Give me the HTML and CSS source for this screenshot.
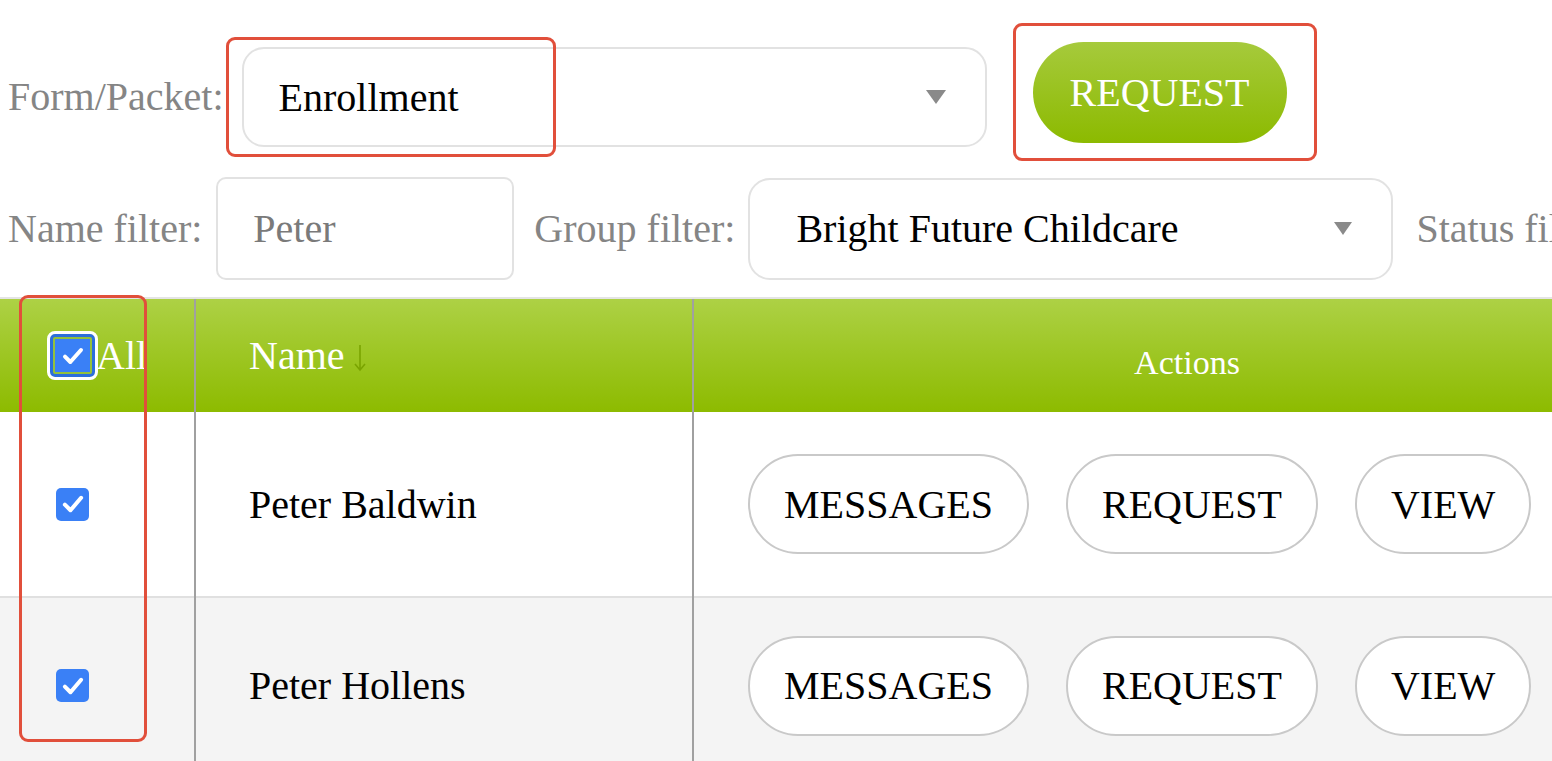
FILE: index.html
```html
<!DOCTYPE html>
<html>
<head>
<meta charset="utf-8">
<link rel="stylesheet" href="styles.css">
</head>
<body>
<div class="page">
  <div class="filters">
    <div class="row row-form">
      <span class="label">Form/Packet:</span>
      <div class="select select-form"><span>Enrollment</span><span class="caret"></span></div>
      <button class="btn-green">REQUEST</button>
    </div>
    <div class="row row-filter">
      <span class="label label-name">Name filter:</span>
      <div class="input"><span class="placeholder">Peter</span></div>
      <span class="label label-group">Group filter:</span>
      <div class="select select-group"><span>Bright Future Childcare</span><span class="caret"></span></div>
      <span class="label label-status">Status filter:</span>
    </div>
  </div>

  <table class="grid">
    <colgroup><col class="c1"><col class="c2"><col class="c3"></colgroup>
    <thead>
      <tr>
        <th class="th-all"><span class="all-wrap"><span class="cb cb-head"><svg viewBox="0 0 24 24"><path d="M6 12.5l4 4 8-9" /></svg></span><span class="all-text">All</span></span></th>
        <th class="th-name">Name<svg class="sort" viewBox="0 0 14 30"><path d="M7 2v25M2 21l5 6 5-6"/></svg></th>
        <th class="th-actions"><span class="actions-label">Actions</span></th>
      </tr>
    </thead>
    <tbody>
      <tr class="r1">
        <td class="td-cb"><span class="cb"><svg viewBox="0 0 24 24"><path d="M5.5 12.5l4.5 4.5 8.5-10" /></svg></span></td>
        <td class="td-name">Peter Baldwin</td>
        <td class="td-actions"><div class="actions"><button class="pill">MESSAGES</button><button class="pill">REQUEST</button><button class="pill">VIEW</button></div></td>
      </tr>
      <tr class="r2">
        <td class="td-cb"><span class="cb"><svg viewBox="0 0 24 24"><path d="M5.5 12.5l4.5 4.5 8.5-10" /></svg></span></td>
        <td class="td-name">Peter Hollens</td>
        <td class="td-actions"><div class="actions"><button class="pill">MESSAGES</button><button class="pill">REQUEST</button><button class="pill">VIEW</button></div></td>
      </tr>
    </tbody>
  </table>

  <div class="mark mark-1"></div>
  <div class="mark mark-2"></div>
  <div class="mark mark-3"></div>
</div>
</body>
</html>
```

FILE: styles.css
```css
html, body {
  margin: 0;
  padding: 0;
  background: #fff;
  overflow: hidden;
}
body {
  width: 1552px;
  height: 761px;
  font-family: "Liberation Serif", "Times New Roman", serif;
  font-size: 40px;
  color: #000;
}
.page {
  position: relative;
  width: 1552px;
  height: 761px;
  overflow: hidden;
}
.filters {
  padding: 47px 0 0 8px;
  display: flex;
  flex-direction: column;
  gap: 30px;
}
.row {
  display: flex;
  align-items: center;
  white-space: nowrap;
}
.row > * { flex-shrink: 0; }
.label {
  color: #858585;
  line-height: 1;
}
.row-form .label { margin-right: 18px; }
.select {
  box-sizing: border-box;
  height: 100px;
  border: 2px solid #e2e2e2;
  border-radius: 22px;
  display: flex;
  align-items: center;
  justify-content: space-between;
  padding: 0 39px 0 35px;
  color: #000;
}
.select-form { width: 745px; }
.caret {
  width: 0;
  height: 0;
  border-left: 10px solid transparent;
  border-right: 10px solid transparent;
  border-top: 14px solid #8a8a8a;
}
.btn-green {
  box-sizing: border-box;
  width: 254px;
  height: 101px;
  margin-left: 46px;
  margin-top: -9px;
  border: none;
  border-radius: 51px;
  background: linear-gradient(#a6ca3c, #8cba00);
  color: #fff;
  font-family: "Liberation Serif", "Times New Roman", serif;
  font-size: 40px;
  padding: 0;
}
.row-filter { height: 103px; }
.label-name { margin-right: 14px; }
.label-group { margin-right: 13px; }
.input {
  box-sizing: border-box;
  width: 298px;
  height: 103px;
  border: 2px solid #e2e2e2;
  border-radius: 10px;
  display: flex;
  align-items: center;
  padding-left: 35px;
  margin-right: 20px;
}
.placeholder { color: #7a7a7a; }
.select-group {
  width: 645px;
  height: 102px;
  padding-left: 46px;
  margin-right: 23px;
}
.select-group .caret {
  border-left-width: 9px;
  border-right-width: 9px;
  border-top-width: 13px;
}

.grid {
  margin-top: 17px;
  width: 1680px;
  border-collapse: collapse;
  table-layout: fixed;
}
.c1 { width: 195px; }
.c2 { width: 498px; }
.c3 { width: 987px; }
.grid th {
  height: 113px;
  padding: 0;
  background: linear-gradient(#add145, #8dbb00);
  color: #fff;
  font-weight: normal;
  text-align: left;
  border-top: 2px solid #e4e4e4;
  border-left: 2px solid #a0a0a0;
  vertical-align: middle;
}
.grid th:first-child, .grid td:first-child { border-left: none; }
.th-all { padding-left: 47px !important; }
.all-wrap {
  display: flex;
  align-items: center;
  white-space: nowrap;
}
.th-name { padding-left: 53px !important; white-space: nowrap; }
.sort {
  width: 14px;
  height: 30px;
  margin-left: 8px;
  vertical-align: -4px;
  fill: none;
  stroke: #7aa400;
  stroke-width: 1.6;
}
.th-actions {
  text-align: center !important;
  font-size: 34px;
}
.actions-label {
  display: inline-block;
  padding-top: 14px;
}
.grid td {
  height: 184px;
  padding: 0;
  border-left: 2px solid #a0a0a0;
  border-top: 2px solid #e0e0e0;
  vertical-align: middle;
}
.r1 td { border-top: none; }
.r2 td { background: #f4f4f4; height: 175px; }
.td-cb { padding-left: 56px !important; }
.td-name { padding-left: 53px !important; }
.td-actions { padding-left: 54px !important; }
.cb {
  box-sizing: border-box;
  width: 33px;
  height: 33px;
  border-radius: 5px;
  background: #3a80f6;
  display: flex;
  align-items: center;
  justify-content: center;
}
.cb svg {
  width: 30px;
  height: 30px;
  fill: none;
  stroke: #fff;
  stroke-width: 3.2;
  stroke-linecap: round;
  stroke-linejoin: round;
}
.cb-head {
  width: 51px;
  height: 49px;
  border-radius: 8px;
  border: 3px solid #fff;
  background: #2c6fdc;
  padding: 3px;
  box-shadow: inset 0 0 0 3px #2c6fdc, inset 0 0 0 5px #93c13c, inset 0 0 0 40px #3a80f6;
}
.cb-head svg { width: 32px; height: 32px; stroke-width: 3; }
.all-text { margin-left: -2px; }
.actions {
  display: flex;
  gap: 37px;
  white-space: nowrap;
}
.pill {
  box-sizing: border-box;
  height: 100px;
  padding: 0 34px;
  border: 2px solid #c9c9c9;
  border-radius: 50px;
  background: #fff;
  color: #000;
  font-family: "Liberation Serif", "Times New Roman", serif;
  font-size: 40px;
}

.mark {
  position: absolute;
  box-sizing: border-box;
  border: 3px solid #e14f3b;
  border-radius: 9px;
  pointer-events: none;
}
.mark-1 { left: 226px; top: 37px; width: 330px; height: 120px; }
.mark-2 { left: 1013px; top: 23px; width: 304px; height: 138px; }
.mark-3 { left: 19px; top: 295px; width: 128px; height: 447px; }
```
